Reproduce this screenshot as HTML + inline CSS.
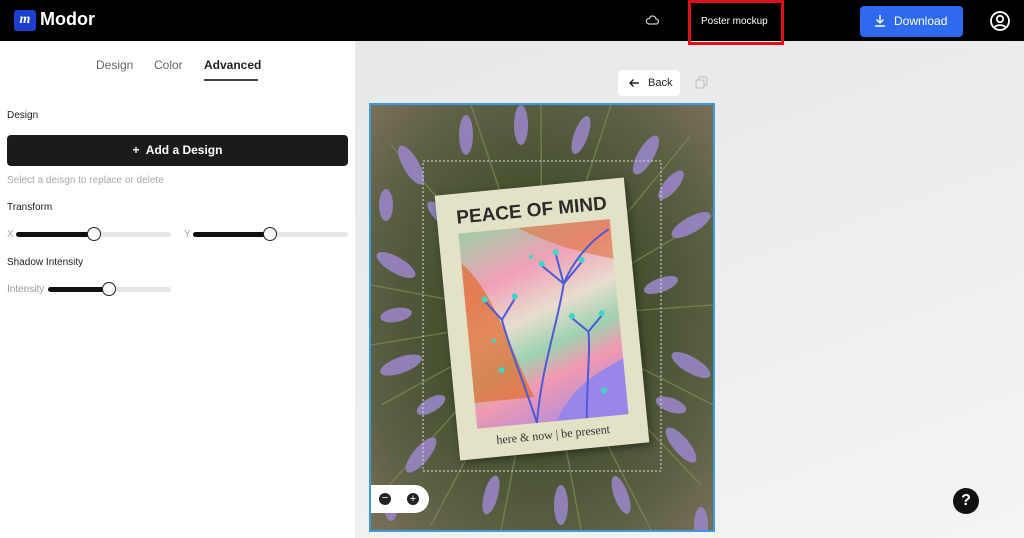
<!DOCTYPE html><html><head><style>
*{margin:0;padding:0;box-sizing:border-box}
body{width:1024px;height:538px;overflow:hidden;font-family:"Liberation Sans",sans-serif;background:linear-gradient(160deg,#e6e6e6 0%,#ececec 50%,#f4f4f4 100%);position:relative}
.hdr{position:absolute;left:0;top:0;width:1024px;height:41px;background:#000}
.abs{position:absolute}
.panel{position:absolute;left:0;top:41px;width:355px;height:497px;background:#fff}
.lbl{position:absolute;font-size:10px;color:#222}
.track{position:absolute;height:5px;background:#e6e6e6;border-radius:3px}
.fill{position:absolute;height:5px;background:#111;border-radius:3px}
.knob{position:absolute;width:14px;height:14px;border:1.5px solid #222;background:#fff;border-radius:50%}
</style></head><body>
<div class="hdr"></div>
<div class="abs" style="left:14px;top:10px;width:22px;height:21px;background:#1d3fcf;border-radius:3px;color:#fff;font:italic bold 14px 'Liberation Serif',serif;text-align:center;line-height:20px">m</div>
<div class="abs" style="left:40px;top:9px;color:#fff;font-weight:bold;font-size:18px">Modor</div>
<svg class="abs" style="left:645px;top:14px" width="14" height="12" viewBox="0 0 14 12"><path d="M4 10h7a2.5 2.5 0 0 0 0-5 3.5 3.5 0 0 0-6.8-.5A2.7 2.7 0 0 0 4 10z" fill="none" stroke="#ccc" stroke-width="1.2"/></svg>
<div class="abs" style="left:688px;top:0;width:96px;height:45px;border:3px solid #e0101a"></div>
<div class="abs" style="left:701px;top:16px;color:#fff;font-size:10px">Poster mockup</div>
<div class="abs" style="left:860px;top:6px;width:103px;height:31px;background:#2e6af0;border-radius:4px;color:#fff;font-size:12px;line-height:31px;padding-left:34px">Download</div>
<svg class="abs" style="left:874px;top:14px" width="12" height="13" viewBox="0 0 12 13"><path d="M6 1v8M2.5 5.5L6 9l3.5-3.5M1 12h10" fill="none" stroke="#fff" stroke-width="1.4"/></svg>
<svg class="abs" style="left:989px;top:10px" width="22" height="22" viewBox="0 0 22 22"><circle cx="11" cy="11" r="9" fill="none" stroke="#fff" stroke-width="1.8"/><circle cx="11" cy="9" r="3.2" fill="none" stroke="#fff" stroke-width="1.8"/><path d="M5.5 17a7 5 0 0 1 11 0" fill="none" stroke="#fff" stroke-width="1.8"/></svg>

<div class="panel">
<div class="abs" style="left:96px;top:17px;font-size:12px;color:#666">Design</div>
<div class="abs" style="left:154px;top:17px;font-size:12px;color:#666">Color</div>
<div class="abs" style="left:204px;top:17px;font-size:12px;color:#222;font-weight:bold">Advanced</div>
<div class="abs" style="left:204px;top:38px;width:54px;height:2px;background:#444"></div>
<div class="lbl" style="left:7px;top:69px">Design</div>
<div class="abs" style="left:7px;top:94px;width:341px;height:31px;background:#1b1b1b;border-radius:4px;color:#fff;font-size:12px;font-weight:bold;text-align:center;line-height:31px">+&nbsp; Add a Design</div>
<div class="lbl" style="left:7px;top:134px;color:#aaa">Select a deisgn to replace or delete</div>
<div class="lbl" style="left:7px;top:161px">Transform</div>
<div class="lbl" style="left:7px;top:188px;color:#aaa">X</div>
<div class="track" style="left:16px;top:191px;width:155px"></div><div class="fill" style="left:16px;top:191px;width:78px"></div><div class="knob" style="left:87px;top:186px"></div>
<div class="lbl" style="left:184px;top:188px;color:#aaa">Y</div>
<div class="track" style="left:193px;top:191px;width:155px"></div><div class="fill" style="left:193px;top:191px;width:77px"></div><div class="knob" style="left:263px;top:186px"></div>
<div class="lbl" style="left:7px;top:216px">Shadow Intensity</div>
<div class="lbl" style="left:7px;top:243px;color:#999">Intensity</div>
<div class="track" style="left:48px;top:246px;width:123px"></div><div class="fill" style="left:48px;top:246px;width:62px"></div><div class="knob" style="left:102px;top:241px"></div>
</div>

<div class="abs" style="left:618px;top:70px;width:62px;height:26px;background:#fff;border-radius:4px;font-size:11px;line-height:26px;padding-left:30px;color:#222">Back</div>
<svg class="abs" style="left:628px;top:77px" width="12" height="12" viewBox="0 0 12 12"><path d="M11 6H2M5.5 2.5L2 6l3.5 3.5" fill="none" stroke="#222" stroke-width="1.4"/></svg>
<svg class="abs" style="left:695px;top:76px" width="13" height="13" viewBox="0 0 13 13"><rect x="4" y="1" width="8" height="8" rx="1.5" fill="none" stroke="#bbb"/><rect x="1" y="4" width="8" height="8" rx="1.5" fill="#ececec" stroke="#bbb"/></svg>

<div class="abs" style="left:369px;top:103px;width:346px;height:429px;border:2px solid #3b9be0;overflow:hidden;background:radial-gradient(ellipse at 50% 50%,#4a5232 0%,#475231 45%,#5d6044 75%,#7a705a 100%)">
<svg width="342" height="425" style="position:absolute;left:0;top:0">
<g stroke="#7d8a5a" stroke-width="1.3" opacity=".8"><path d="M171 212L20 40M171 212L320 30M171 212L10 300M171 212L330 380M171 212L60 420M171 212L280 425M171 212L0 180M171 212L342 200M171 212L170 0M171 212L100 0M171 212L240 0M171 212L0 400M171 212L342 110M171 212L130 425M171 212L210 425M171 212L0 240M171 212L342 300"/></g>
<g fill="#9785c4" opacity=".9">
<ellipse cx="40" cy="60" rx="8" ry="22" transform="rotate(-30 40 60)"/><ellipse cx="95" cy="30" rx="7" ry="20"/><ellipse cx="150" cy="20" rx="7" ry="20"/><ellipse cx="210" cy="30" rx="7" ry="20" transform="rotate(20 210 30)"/><ellipse cx="275" cy="50" rx="8" ry="22" transform="rotate(30 275 50)"/><ellipse cx="320" cy="120" rx="8" ry="22" transform="rotate(60 320 120)"/><ellipse cx="25" cy="160" rx="8" ry="22" transform="rotate(-60 25 160)"/><ellipse cx="30" cy="260" rx="8" ry="22" transform="rotate(70 30 260)"/><ellipse cx="320" cy="260" rx="8" ry="22" transform="rotate(-60 320 260)"/><ellipse cx="310" cy="340" rx="8" ry="22" transform="rotate(-40 310 340)"/><ellipse cx="50" cy="350" rx="8" ry="22" transform="rotate(40 50 350)"/><ellipse cx="120" cy="390" rx="7" ry="20" transform="rotate(15 120 390)"/><ellipse cx="190" cy="400" rx="7" ry="20"/><ellipse cx="250" cy="390" rx="7" ry="20" transform="rotate(-20 250 390)"/><ellipse cx="300" cy="80" rx="7" ry="18" transform="rotate(40 300 80)"/><ellipse cx="15" cy="100" rx="7" ry="16"/><ellipse cx="70" cy="110" rx="7" ry="18" transform="rotate(-45 70 110)"/><ellipse cx="290" cy="180" rx="7" ry="18" transform="rotate(70 290 180)"/><ellipse cx="25" cy="210" rx="7" ry="16" transform="rotate(80 25 210)"/><ellipse cx="330" cy="420" rx="7" ry="18"/><ellipse cx="300" cy="300" rx="7" ry="16" transform="rotate(-70 300 300)"/><ellipse cx="60" cy="300" rx="7" ry="16" transform="rotate(60 60 300)"/><ellipse cx="20" cy="400" rx="7" ry="16"/></g>
<rect x="52" y="56" width="238" height="310" fill="none" stroke="#ddd" stroke-dasharray="2 2"/>
</svg>
<div style="position:absolute;left:76px;top:81px;width:190px;height:266px;background:#e3e2c6;transform:rotate(-5.5deg);box-shadow:2px 3px 8px rgba(0,0,0,.4)">
<div style="position:absolute;left:0;top:14px;width:190px;text-align:center;font-weight:bold;font-size:19px;color:#2b2b2b">PEACE OF MIND</div>
<div style="position:absolute;left:20px;top:40px;width:152px;height:196px;background:linear-gradient(160deg,#9fcda6 0%,#f0a0b6 25%,#e8ddd0 45%,#9dd2b1 60%,#f19ab0 72%,#a08ae6 100%)">
<svg width="152" height="196"><path d="M0 30C30 60 40 120 60 170L0 170z" fill="#e0743c" opacity=".8"/><path d="M60 0L152 0 152 40C120 30 90 20 60 0z" fill="#e0743c" opacity=".6"/><path d="M80 196C100 160 130 150 152 140L152 196z" fill="#9a86ea"/><g stroke="#4c5ad8" stroke-width="2" fill="none"><path d="M60 196C70 140 90 100 100 60M100 60L80 40M100 60L120 40M100 60L95 30M60 196C50 150 40 120 35 90M35 90L20 70M35 90L50 70M110 196C115 150 120 130 120 110M120 110L105 95M120 110L135 95M100 60C110 40 130 20 150 10"/></g><g fill="#3fd6c8"><circle cx="80" cy="38" r="3"/><circle cx="95" cy="28" r="3"/><circle cx="120" cy="38" r="3"/><circle cx="20" cy="68" r="3"/><circle cx="50" cy="68" r="3"/><circle cx="105" cy="93" r="3"/><circle cx="135" cy="93" r="3"/><circle cx="30" cy="140" r="3"/><circle cx="70" cy="30" r="2"/><circle cx="25" cy="110" r="2"/><circle cx="130" cy="170" r="3"/></g></svg>
</div>
<div style="position:absolute;left:0;top:242px;width:190px;text-align:center;font-family:'Liberation Serif',serif;font-size:12px;color:#333">here &amp; now | be present</div>
</div>
<div style="position:absolute;left:0;top:380px;width:58px;height:28px;background:#fff;border-radius:0 14px 14px 0"></div>
<div style="position:absolute;left:8px;top:388px;width:12px;height:12px;border-radius:50%;background:#222;color:#fff;font-size:11px;line-height:11px;text-align:center">−</div>
<div style="position:absolute;left:36px;top:388px;width:12px;height:12px;border-radius:50%;background:#222;color:#fff;font-size:11px;line-height:12px;text-align:center">+</div>
</div>
<div class="abs" style="left:953px;top:488px;width:26px;height:26px;border-radius:50%;background:#111;color:#fff;font-weight:bold;font-size:16px;text-align:center;line-height:26px">?</div>
</body></html>
